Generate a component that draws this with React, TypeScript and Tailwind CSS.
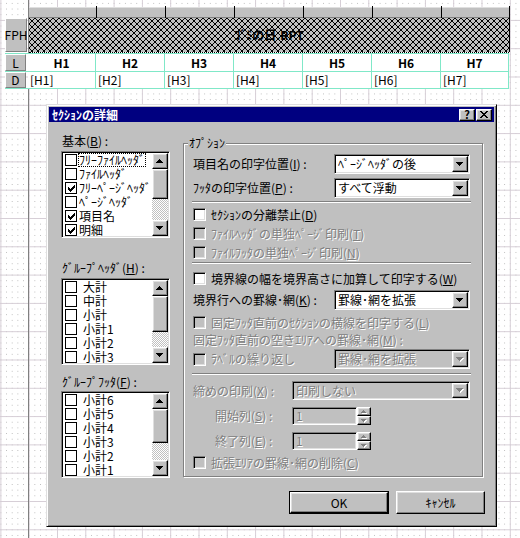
import React from "react";

const FONT = "font-['Noto_Sans_CJK_JP','Noto_Sans_CJK_SC',sans-serif]";
const RAISED =
  "border border-t-white border-l-white border-r-black border-b-black shadow-[inset_-1px_-1px_0_#808080,inset_1px_1px_0_#dfdfdf]";
const SUNKEN =
  "border border-t-[#808080] border-l-[#808080] border-r-white border-b-white shadow-[inset_1px_1px_0_#000,inset_-1px_-1px_0_#dfdfdf]";
const DIS = "text-[#808080] [text-shadow:1px_1px_0_#fff]";
const TEAL = "border-[#80e8c8]";

const M = ({ c }: { c: string }) => <span className="underline underline-offset-[1px]">{c}</span>;

const UP = "M3 0h1v1h-1zM2 1h3v1h-3zM1 2h5v1h-5zM0 3h7v1h-7z";
const DOWN = "M0 0h7v1h-7zM1 1h5v1h-5zM2 2h3v1h-3zM3 3h1v1h-1z";
const SUP = "M2 0h1v1h-1zM1 1h3v1h-3zM0 2h5v1h-5z";
const SDOWN = "M0 0h5v1h-5zM1 1h3v1h-3zM2 2h1v1h-1z";

function Tri({ d, dis, w = 8, h = 5 }: { d: string; dis?: boolean; w?: number; h?: number }) {
  return (
    <svg width={w} height={h} viewBox={`0 0 ${w} ${h}`} shapeRendering="crispEdges">
      {dis && <path d={d} fill="#fff" transform="translate(1 1)" />}
      <path d={d} fill={dis ? "#808080" : "#000"} />
    </svg>
  );
}

function Check() {
  return (
    <svg width="7" height="7" viewBox="0 0 7 7" shapeRendering="crispEdges">
      <path
        d="M0 2h1v3h-1zM1 3h1v3h-1zM2 4h1v3h-1zM3 3h1v3h-1zM4 2h1v3h-1zM5 1h1v3h-1zM6 0h1v3h-1z"
        fill="#000"
      />
    </svg>
  );
}

function Grid() {
  return (
    <svg className="absolute inset-0" width="520" height="538" shapeRendering="crispEdges">
      <defs>
        <pattern id="dots" x="0.4" y="2.9" width="5.66" height="5.66" patternUnits="userSpaceOnUse">
          <rect width="1" height="1" fill="#bcbcbc" />
        </pattern>
        <pattern id="cells" x="0.4" y="19.9" width="28.3" height="28.3" patternUnits="userSpaceOnUse">
          <rect width="28.3" height="1" fill="#d6ced6" />
          <rect width="1" height="28.3" fill="#d6ced6" />
        </pattern>
      </defs>
      <rect width="520" height="538" fill="url(#dots)" />
      <rect width="520" height="538" fill="url(#cells)" />
      <rect x="28" width="1" height="538" fill="#808080" />
    </svg>
  );
}

const COLW = ["w-[68px]", "w-[69px]", "w-[69px]", "w-[69px]", "w-[69px]", "w-[69px]", "w-[68px]"];

function Label({ t, h }: { t: string; h: string }) {
  return (
    <div
      className={`${h} w-[22px] flex items-center justify-center bg-[#c0c0c0] border border-t-white border-l-white border-r-[#808080] border-b-[#808080]`}
    >
      {t}
    </div>
  );
}

function Report() {
  return (
    <div className="relative flex flex-col pt-[6px]">
      <div className="ml-[29px] flex h-[12px]">
        {COLW.map((w, i) => (
          <div key={i} className={`${w} h-full border-r border-black pt-[1px]`}>
            <div className="h-full bg-[#c0c0c0] border-t border-t-[#dfdfdf] border-b border-b-[#808080]" />
          </div>
        ))}
      </div>
      <div className="flex h-[34px]">
        <div className="ml-[5px]">
          <Label t="FPH" h="h-[34px]" />
        </div>
        <div className="relative ml-[2px] flex w-[481px] items-center justify-center border-r border-black bg-[#c0c0c0]">
          <svg className="absolute inset-0" width="480" height="34" shapeRendering="crispEdges">
            <defs>
              <pattern id="hatch" width="6" height="6" patternUnits="userSpaceOnUse">
                <path
                  d="M0 0h1v1h-1zM1 1h1v1h-1zM2 2h1v1h-1zM3 3h1v1h-1zM4 4h1v1h-1zM5 5h1v1h-1zM5 0h1v1h-1zM4 1h1v1h-1zM3 2h1v1h-1zM2 3h1v1h-1zM1 4h1v1h-1zM0 5h1v1h-1z"
                  fill="#000"
                />
              </pattern>
            </defs>
            <rect width="480" height="34" fill="url(#hatch)" />
          </svg>
          <span className="relative font-bold">ｺﾞﾐの日.RPT</span>
        </div>
      </div>
      <div className="ml-[29px] h-0 w-[480px] border-b border-dotted border-black" />
      <div className={`ml-[5px] w-[504px] border-t ${TEAL}`}>
        <div className={`flex h-[18px] border-b ${TEAL}`}>
          <Label t="L" h="h-[17px]" />
          <div className="ml-[2px] flex">
            {COLW.map((w, i) => (
              <div key={i} className={`${w} flex items-center justify-center border-r ${TEAL} bg-white font-bold`}>
                H{i + 1}
              </div>
            ))}
          </div>
        </div>
        <div className={`flex h-[17px] border-b ${TEAL}`}>
          <Label t="D" h="h-[16px]" />
          <div className="ml-[2px] flex">
            {COLW.map((w, i) => (
              <div key={i} className={`${w} flex items-center border-r ${TEAL} bg-white pl-[2px]`}>
                [H{i + 1}]
              </div>
            ))}
          </div>
        </div>
      </div>
    </div>
  );
}

function SBtn({ d }: { d: string }) {
  return (
    <div className={`flex h-[16px] w-[16px] shrink-0 items-center justify-center bg-[#c0c0c0] ${RAISED}`}>
      <Tri d={d} />
    </div>
  );
}

type Item = { t: string; c?: boolean; f?: boolean };

function ListBox({ items, thumb, pad, mt }: { items: Item[]; thumb: string; pad: string; mt: string }) {
  return (
    <div className={`${mt} flex h-[87px] w-[109px] bg-white p-[1px] ${SUNKEN}`}>
      <div className="flex-1 overflow-hidden">
        {items.map((it, i) => (
          <div key={i} className="flex h-[14px] items-center whitespace-nowrap pl-[2px]">
            <div className="flex h-[12px] w-[12px] shrink-0 items-center justify-center border border-black bg-white">
              {it.c && <Check />}
            </div>
            <span className={`${pad} leading-[12px] ${it.f ? "[outline:1px_dotted_#000]" : ""}`}>{it.t}</span>
          </div>
        ))}
      </div>
      <div className="flex w-[16px] shrink-0 flex-col">
        <SBtn d={UP} />
        <div className={`${thumb} shrink-0 bg-[#c0c0c0] ${RAISED}`} />
        <div className="flex-1 bg-[image:repeating-conic-gradient(#c0c0c0_0%_25%,#ffffff_0%_50%)] bg-[length:2px_2px]" />
        <SBtn d={DOWN} />
      </div>
    </div>
  );
}

function LeftCol() {
  return (
    <div className="ml-[12px] flex w-[109px] flex-col">
      <div className="mt-[11px] flex h-[16px] items-center pl-[1px]">
        基本(<M c="B" />) :
      </div>
      <ListBox
        mt="mt-[2px]"
        thumb="h-[30px]"
        pad="ml-[2px]"
        items={[
          { t: "ﾌﾘｰﾌｧｲﾙﾍｯﾀﾞ", f: true },
          { t: "ﾌｧｲﾙﾍｯﾀﾞ" },
          { t: "ﾌﾘｰﾍﾟｰｼﾞﾍｯﾀﾞ", c: true },
          { t: "ﾍﾟｰｼﾞﾍｯﾀﾞ" },
          { t: "項目名", c: true },
          { t: "明細", c: true },
        ]}
      />
      <div className="mt-[22px] flex h-[16px] items-center pl-[1px]">
        ｸﾞﾙｰﾌﾟﾍｯﾀﾞ(<M c="H" />) :
      </div>
      <ListBox
        mt="mt-[2px]"
        thumb="h-[36px]"
        pad="ml-[6px]"
        items={["大計", "中計", "小計", "小計1", "小計2", "小計3"].map((t) => ({ t }))}
      />
      <div className="mt-[9px] flex h-[16px] items-center pl-[1px]">
        ｸﾞﾙｰﾌﾟﾌｯﾀ(<M c="F" />) :
      </div>
      <ListBox
        mt="mt-[1px]"
        thumb="h-[34px]"
        pad="ml-[6px]"
        items={["小計6", "小計5", "小計4", "小計3", "小計2", "小計1"].map((t) => ({ t }))}
      />
    </div>
  );
}

function Combo({ text, w, h, dis }: { text: string; w: string; h: string; dis?: boolean }) {
  return (
    <div className={`${w} ${h} flex shrink-0 p-[1px] ${SUNKEN} ${dis ? "bg-[#c0c0c0]" : "bg-white"}`}>
      <div className={`flex flex-1 items-center overflow-hidden whitespace-nowrap pl-[2px] ${dis ? DIS : ""}`}>{text}</div>
      <div className={`flex w-[16px] items-center justify-center bg-[#c0c0c0] ${RAISED}`}>
        <Tri d={DOWN} dis={dis} />
      </div>
    </div>
  );
}

function CB({ dis }: { dis?: boolean }) {
  return <div className={`h-[13px] w-[13px] shrink-0 ${SUNKEN} ${dis ? "bg-[#c0c0c0]" : "bg-white"}`} />;
}

function CBRow({ mt, dis, children }: { mt: string; dis?: boolean; children: React.ReactNode }) {
  return (
    <div className={`${mt} flex h-[19px] items-center whitespace-nowrap`}>
      <CB dis={dis} />
      <span className={`ml-[5px] ${dis ? DIS : ""}`}>{children}</span>
    </div>
  );
}

function Sep({ mt }: { mt: string }) {
  return <div className={`${mt} mx-[-1px] h-[2px] shrink-0 border-t border-t-[#808080] border-b border-b-white`} />;
}

function SpinEdit() {
  return (
    <div className="flex h-[18px]">
      <div className={`flex w-[65px] items-center bg-[#c0c0c0] p-[1px] pl-[3px] ${SUNKEN} ${DIS}`}>1</div>
      <div className="flex w-[14px] flex-col">
        <div className={`flex h-[9px] items-center justify-center bg-[#c0c0c0] ${RAISED}`}>
          <Tri d={SUP} dis w={6} h={4} />
        </div>
        <div className={`flex h-[9px] items-center justify-center bg-[#c0c0c0] ${RAISED}`}>
          <Tri d={SDOWN} dis w={6} h={4} />
        </div>
      </div>
    </div>
  );
}

function GroupBox() {
  return (
    <div className="relative ml-[13px] mt-[21px] flex w-[300px] flex-col self-start border border-[#808080] pb-[4px] pl-[9px] pr-[12px] shadow-[inset_1px_1px_0_#fff,1px_1px_0_#fff]">
      <span className="absolute left-[4px] top-[-7px] bg-[#c0c0c0] px-[1px]">ｵﾌﾟｼｮﾝ</span>
      <div className="mt-[10px] flex h-[20px] items-center">
        <div className="w-[141px]">
          項目名の印字位置(<M c="I" />) :
        </div>
        <Combo text="ﾍﾟｰｼﾞﾍｯﾀﾞの後" w="w-[136px]" h="h-[20px]" />
      </div>
      <div className="mt-[4px] flex h-[20px] items-center">
        <div className="w-[141px]">
          ﾌｯﾀの印字位置(<M c="P" />) :
        </div>
        <Combo text="すべて浮動" w="w-[136px]" h="h-[20px]" />
      </div>
      <Sep mt="mt-[3px]" />
      <CBRow mt="mt-[2px]">
        ｾｸｼｮﾝの分離禁止(<M c="D" />)
      </CBRow>
      <CBRow mt="mt-0" dis>
        ﾌｧｲﾙﾍｯﾀﾞの単独ﾍﾟｰｼﾞ印刷(<M c="T" />)
      </CBRow>
      <CBRow mt="mt-0" dis>
        ﾌｧｲﾙﾌｯﾀの単独ﾍﾟｰｼﾞ印刷(<M c="N" />)
      </CBRow>
      <Sep mt="mt-0" />
      <CBRow mt="mt-[5px]">
        境界線の幅を境界高さに加算して印字する(<M c="W" />)
      </CBRow>
      <div className="mt-[2px] flex h-[20px] items-center">
        <div className="w-[141px]">
          境界行への罫線･網(<M c="K" />) :
        </div>
        <Combo text="罫線･網を拡張" w="w-[136px]" h="h-[20px]" />
      </div>
      <CBRow mt="mt-[3px]" dis>
        固定ﾌｯﾀ直前のｾｸｼｮﾝの横線を印字する(<M c="L" />)
      </CBRow>
      <div className={`flex h-[16px] items-center whitespace-nowrap ${DIS}`}>
        固定ﾌｯﾀ直前の空きｴﾘｱへの罫線･網(<M c="M" />) :
      </div>
      <div className="mt-[1px] flex h-[20px] items-center">
        <div className="flex w-[141px] items-center">
          <CB dis />
          <span className={`ml-[5px] ${DIS}`}>ﾗﾍﾞﾙの繰り返し</span>
        </div>
        <Combo text="罫線･網を拡張" w="w-[136px]" h="h-[20px]" dis />
      </div>
      <Sep mt="mt-[4px]" />
      <div className="mt-[6px] flex h-[19px] items-center">
        <div className={`w-[99px] ${DIS}`}>
          締めの印刷(<M c="X" />) :
        </div>
        <Combo text="印刷しない" w="w-[178px]" h="h-[19px]" dis />
      </div>
      <div className="mt-[7px] flex h-[18px] items-center">
        <div className={`w-[99px] pl-[22px] ${DIS}`}>
          開始列(<M c="S" />) :
        </div>
        <SpinEdit />
      </div>
      <div className="mt-[7px] flex h-[18px] items-center">
        <div className={`w-[99px] pl-[22px] ${DIS}`}>
          終了列(<M c="E" />) :
        </div>
        <SpinEdit />
      </div>
      <CBRow mt="mt-[3px]" dis>
        拡張ｴﾘｱの罫線･網の削除(<M c="C" />)
      </CBRow>
    </div>
  );
}

function CapBtn({ children }: { children: React.ReactNode }) {
  return (
    <div className={`flex h-[12px] w-[16px] items-center justify-center bg-[#c0c0c0] text-[11px] font-bold ${RAISED}`}>
      {children}
    </div>
  );
}

function Dialog() {
  return (
    <div className="absolute left-[46px] top-[104px] flex h-[423px] w-[451px] flex-col border border-t-[#dfdfdf] border-l-[#dfdfdf] border-r-black border-b-black bg-[#c0c0c0] p-[2px] shadow-[inset_1px_1px_0_#fff,inset_-1px_-1px_0_#808080]">
      <div className="flex h-[15px] shrink-0 items-center bg-[#000080] pl-[3px] pr-[2px]">
        <span className="font-bold text-white">ｾｸｼｮﾝの詳細</span>
        <div className="ml-auto flex gap-[1px]">
          <CapBtn>?</CapBtn>
          <CapBtn>
            <svg width="8" height="7" viewBox="0 0 8 7" shapeRendering="crispEdges">
              <path
                d="M0 0h2v1h-2zM6 0h2v1h-2zM1 1h2v1h-2zM5 1h2v1h-2zM2 2h4v1h-4zM3 3h2v1h-2zM2 4h4v1h-4zM1 5h2v1h-2zM5 5h2v1h-2zM0 6h2v1h-2zM6 6h2v1h-2z"
                fill="#000"
              />
            </svg>
          </CapBtn>
        </div>
      </div>
      <div className="flex">
        <LeftCol />
        <GroupBox />
      </div>
      <div className="mt-[13px] flex justify-end gap-[7px] pr-[9px]">
        <div className="flex h-[23px] w-[100px] border border-black">
          <div className={`flex flex-1 items-center justify-center bg-[#c0c0c0] ${RAISED}`}>OK</div>
        </div>
        <div className={`flex h-[23px] w-[89px] items-center justify-center bg-[#c0c0c0] ${RAISED}`}>ｷｬﾝｾﾙ</div>
      </div>
    </div>
  );
}

export default function App() {
  return (
    <div className={`relative h-[538px] w-[520px] overflow-hidden bg-white text-[12px] leading-none text-black ${FONT}`}>
      <Grid />
      <Report />
      <Dialog />
    </div>
  );
}
